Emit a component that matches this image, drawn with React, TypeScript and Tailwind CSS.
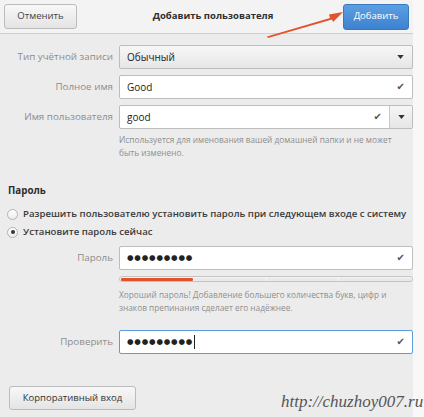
import React from "react";

const Check = () => (
  <span className="mb-[3px] text-[10px] leading-none text-[#555]">✔</span>
);

const Caret = () => (
  <svg width="7" height="4" viewBox="0 0 8 5">
    <path d="M0 0 L8 0 L4 5 Z" fill="#333" />
  </svg>
);

const Row: React.FC<{ label: string; children: React.ReactNode }> = ({
  label,
  children,
}) => (
  <div className="flex h-[24px] items-center">
    <div className="w-[113px] whitespace-nowrap text-right text-[9.8px] leading-[14px] text-[#8c8c8c]">
      {label}
    </div>
    <div className="ml-[6px] flex-1">{children}</div>
  </div>
);

const Field: React.FC<{
  value: string;
  focus?: boolean;
  dots?: boolean;
  combo?: boolean;
}> = ({ value, focus, dots, combo }) => (
  <div
    className={`flex h-[24px] items-center rounded-[2px] border bg-white ${
      focus ? "border-[#5b9bde]" : "border-[#bdbdbd]"
    }`}
  >
    <div className="flex flex-1 items-center pl-[7px]">
      <span
        className={
          dots
            ? "text-[7.5px] leading-none tracking-[0.8px] text-[#222]"
            : "text-[10px] leading-none text-[#222]"
        }
      >
        {value}
      </span>
      {focus && <span className="ml-[1px] h-[14px] w-[1px] bg-[#222]" />}
    </div>
    <div className="flex items-center pr-[7px]">
      <Check />
    </div>
    {combo && (
      <div className="flex h-full w-[23px] items-center justify-center rounded-r-[2px] border-l border-[#c8c8c8] bg-gradient-to-b from-[#f6f6f6] to-[#e6e6e6]">
        <Caret />
      </div>
    )}
  </div>
);

const Radio: React.FC<{ on?: boolean; label: string }> = ({ on, label }) => (
  <div className="flex h-[18px] items-center gap-[5px]">
    <div className="flex h-[11px] w-[11px] shrink-0 items-center justify-center rounded-full border border-[#b4b4b4] bg-gradient-to-b from-white to-[#ececec]">
      {on && <div className="h-[4px] w-[4px] rounded-full bg-[#333]" />}
    </div>
    <span className="whitespace-nowrap text-[9.6px] font-semibold leading-[14px] text-[#3a3a3a]">
      {label}
    </span>
  </div>
);

export default function App() {
  return (
    <div
      className="relative flex h-[417px] w-[424px] overflow-hidden bg-[#ececec]"
      style={{ fontFamily: '"Open Sans", "DejaVu Sans", sans-serif' }}
    >
      <div className="flex w-[413px] flex-col">
        {/* header */}
        <div className="flex h-[34px] shrink-0 items-center justify-between border-b border-[#cfcfcf] bg-[#f3f3f3] px-[4px]">
          <button className="h-[25px] w-[73px] rounded-[3px] border border-[#bcbcbc] bg-gradient-to-b from-[#f8f8f8] to-[#e4e4e4] text-[9.5px] text-[#444]">
            Отменить
          </button>
          <div className="pl-[6px] text-[9.5px] font-bold text-[#2e2e2e]">
            Добавить пользователя
          </div>
          <button className="h-[26px] w-[66px] rounded-[3px] border border-[#3a78c0] bg-gradient-to-b from-[#5b9fe3] to-[#3d82cf] text-[9.5px] text-white">
            Добавить
          </button>
        </div>

        {/* body */}
        <div className="flex flex-col pt-[11px]">
          <Row label="Тип учётной записи">
            <div className="flex h-[24px] items-center justify-between rounded-[2px] border border-[#bdbdbd] bg-gradient-to-b from-[#f7f7f7] to-[#e6e6e6] pl-[7px] pr-[8px]">
              <span className="text-[10px] leading-none text-[#222]">
                Обычный
              </span>
              <Caret />
            </div>
          </Row>
          <div className="h-[6px]" />
          <Row label="Полное имя">
            <Field value="Good" />
          </Row>
          <div className="h-[6px]" />
          <Row label="Имя пользователя">
            <Field value="good" combo />
          </Row>
          <div className="ml-[119px] mt-[4px] whitespace-nowrap text-[8.3px] leading-[13px] text-[#8e8e8e]">
            Используется для именования вашей домашней папки и не может
            <br />
            быть изменено.
          </div>

          <div className="mt-[25px] pl-[8px] text-[9.8px] font-bold leading-[14px] text-[#2e2e2e]">
            Пароль
          </div>
          <div className="mt-[7px] flex flex-col pl-[7px]">
            <Radio label="Разрешить пользователю установить пароль при следующем входе с систему" />
            <Radio on label="Установите пароль сейчас" />
          </div>

          <div className="mt-[5px]">
            <Row label="Пароль">
              <Field value="●●●●●●●●●" dots />
            </Row>
          </div>
          <div className="ml-[119px] mt-[6px] flex h-[6px] items-center gap-[1px] rounded-[3px] border border-[#c4c4c4] bg-[#f4f4f4] px-[1px]">
            <div className="h-[3px] flex-1 rounded-[1px] bg-[#e3502a]" />
            <div className="h-[3px] flex-1 rounded-[1px] bg-[#e9e9e9]" />
            <div className="h-[3px] flex-1 rounded-[1px] bg-[#e9e9e9]" />
            <div className="h-[3px] flex-1 rounded-[1px] bg-[#e9e9e9]" />
          </div>
          <div className="ml-[119px] mt-[6px] whitespace-nowrap text-[8.3px] leading-[13px] text-[#8e8e8e]">
            Хороший пароль! Добавление большего количества букв, цифр и
            <br />
            знаков препинания сделает его надёжнее.
          </div>

          <div className="mt-[16px]">
            <Row label="Проверить">
              <Field value="●●●●●●●●●" dots focus />
            </Row>
          </div>

          <div className="mt-[29px] pl-[9px]">
            <button className="h-[24px] w-[127px] rounded-[3px] border border-[#bcbcbc] bg-gradient-to-b from-[#f8f8f8] to-[#e4e4e4] text-[9.5px] text-[#333]">
              Корпоративный вход
            </button>
          </div>
        </div>
      </div>
      <div className="w-[11px] bg-[#f8f8f8]" />

      {/* annotation arrow */}
      <svg
        className="absolute left-0 top-0"
        width="424"
        height="60"
        viewBox="0 0 424 60"
      >
        <polygon
          points="267,36.5 330,18 329,14.5 343,12 333,22 332,19.5 268,38"
          fill="#e0532b"
        />
      </svg>

      <div
        className="absolute left-[281px] top-[389px] text-[17px] italic text-[#555]"
        style={{ fontFamily: '"Liberation Serif", serif' }}
      >
        http://chuzhoy007.ru
      </div>
    </div>
  );
}
